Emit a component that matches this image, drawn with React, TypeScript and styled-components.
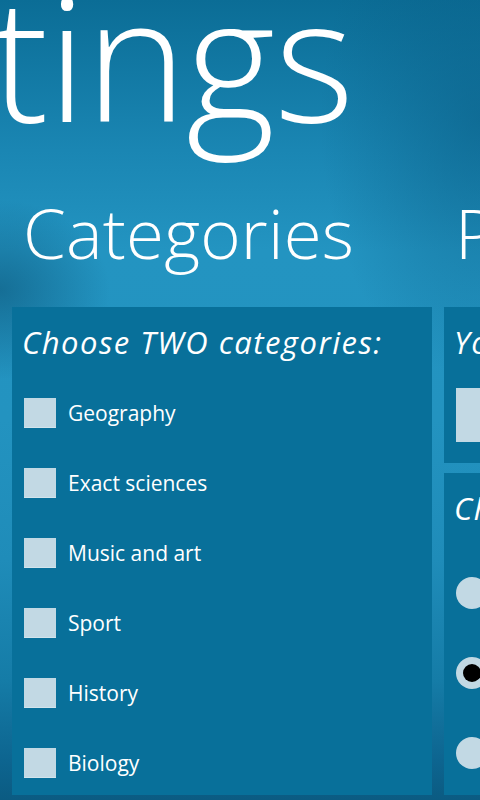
import React from "react";
import styled, { createGlobalStyle } from "styled-components";

const Global = createGlobalStyle`
  html, body { margin: 0; padding: 0; }
  body { width: 480px; height: 800px; overflow: hidden; font-family: "Open Sans", "Noto Sans", sans-serif; }
`;

const Page = styled.div`
  width: 480px;
  height: 800px;
  overflow: hidden;
  position: relative;
  color: #ffffff;
  background:
    radial-gradient(ellipse 110px 90px at 0px 290px, rgba(10, 80, 115, 0.55), rgba(10, 80, 115, 0) 100%),
    radial-gradient(ellipse 160px 260px at 480px 120px, rgba(10, 95, 135, 0.6), rgba(10, 95, 135, 0) 100%),
    linear-gradient(to bottom, #0b6d96 0px, #1a86b3 150px, #2394c1 250px, #2393c0 420px, #1f8cb9 560px, #157ca7 680px, #0d6590 760px, #0b5b82 800px);
`;

const Title = styled.h1`
  margin: 0 0 0 -9px;
  height: 186px;
  font-family: "Open Sans", sans-serif;
  font-weight: 300;
  font-size: 172px;
  line-height: 176px;
  letter-spacing: -1px;
  white-space: nowrap;
  transform: translateY(-33px);
`;

const Columns = styled.div`
  display: flex;
  gap: 12px;
  padding-left: 12px;
`;

const Column = styled.section<{ $width: number }>`
  flex: 0 0 ${(p) => p.$width}px;
  width: ${(p) => p.$width}px;
  display: flex;
  flex-direction: column;
  gap: 10px;
`;

const Heading = styled.h2`
  margin: 0 0 0 11px;
  height: 111px;
  font-family: "Open Sans", sans-serif;
  font-weight: 300;
  font-size: 69px;
  line-height: 92px;
  letter-spacing: 0.2px;
  white-space: nowrap;
`;

const Panel = styled.div<{ $height: number }>`
  box-sizing: border-box;
  height: ${(p) => p.$height}px;
  background: #08709a;
  padding: 14px 12px 12px 12px;
  display: flex;
  flex-direction: column;
  overflow: hidden;
`;

const PanelTitle = styled.div`
  font-family: "Open Sans", sans-serif;
  font-style: italic;
  font-size: 31px;
  line-height: 42px;
  letter-spacing: 1.5px;
  margin-left: -2px;
  white-space: nowrap;
`;

const List = styled.div<{ $gap: number; $top: number }>`
  display: flex;
  flex-direction: column;
  gap: ${(p) => p.$gap}px;
  margin-top: ${(p) => p.$top}px;
`;

const Row = styled.label`
  display: flex;
  align-items: center;
  gap: 12px;
  height: 40px;
  font-family: "Open Sans", sans-serif;
  font-size: 21px;
  white-space: nowrap;
`;

const Box = styled.span`
  flex: 0 0 32px;
  width: 32px;
  height: 30px;
  background: #c2d9e4;
  box-shadow: inset 0 -1px 0 #d2e4ec;
`;

const NameField = styled.div`
  margin-top: 25px;
  height: 54px;
  width: 260px;
  background: #c2d9e4;
`;

const Radio = styled.span<{ $checked?: boolean }>`
  flex: 0 0 32px;
  width: 32px;
  height: 32px;
  border-radius: 50%;
  background: #c2d9e4;
  display: flex;
  align-items: center;
  justify-content: center;
  &::after {
    content: "";
    display: ${(p) => (p.$checked ? "block" : "none")};
    width: 18px;
    height: 18px;
    border-radius: 50%;
    background: #000000;
  }
`;

const categories = ["Geography", "Exact sciences", "Music and art", "Sport", "History", "Biology"];
const levels = ["Easy", "Medium", "Hard"];

export default function App() {
  return (
    <Page>
      <Global />
      <Title>tings</Title>
      <Columns>
        <Column $width={420}>
          <Heading>Categories</Heading>
          <Panel $height={488}>
            <PanelTitle>Choose TWO categories:</PanelTitle>
            <List $gap={30} $top={30}>
              {categories.map((c) => (
                <Row key={c}>
                  <Box />
                  {c}
                </Row>
              ))}
            </List>
          </Panel>
        </Column>
        <Column $width={300}>
          <Heading>Player</Heading>
          <Panel $height={156}>
            <PanelTitle>Your name:</PanelTitle>
            <NameField />
          </Panel>
          <Panel $height={322}>
            <PanelTitle>Choose difficulty:</PanelTitle>
            <List $gap={40} $top={44}>
              {levels.map((l, i) => (
                <Row key={l}>
                  <Radio $checked={i === 1} />
                  {l}
                </Row>
              ))}
            </List>
          </Panel>
        </Column>
      </Columns>
    </Page>
  );
}
